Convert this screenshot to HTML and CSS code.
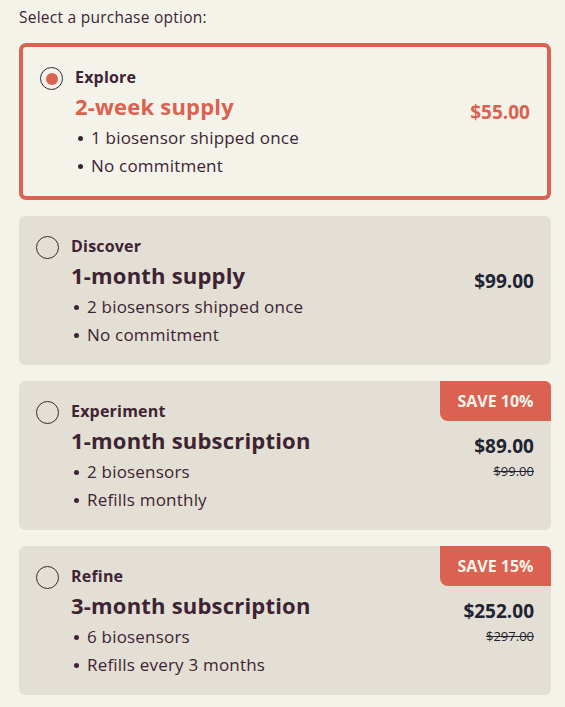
FILE: index.html
```html
<!DOCTYPE html>
<html>
<head>
<meta charset="utf-8">
<link rel="stylesheet" href="styles.css">
</head>
<body>
<div class="page">
  <p class="prompt">Select a purchase option:</p>
  <div class="options">
    <div class="option selected">
      <span class="radio"><span class="dot"></span></span>
      <div class="info">
        <div class="name">Explore</div>
        <div class="title">2-week supply</div>
        <ul class="bullets">
          <li>1 biosensor shipped once</li>
          <li>No commitment</li>
        </ul>
      </div>
      <div class="pricing">
        <div class="price">$55.00</div>
      </div>
    </div>
    <div class="option">
      <span class="radio"></span>
      <div class="info">
        <div class="name">Discover</div>
        <div class="title">1-month supply</div>
        <ul class="bullets">
          <li>2 biosensors shipped once</li>
          <li>No commitment</li>
        </ul>
      </div>
      <div class="pricing">
        <div class="price">$99.00</div>
      </div>
    </div>
    <div class="option">
      <span class="badge">SAVE 10%</span>
      <span class="radio"></span>
      <div class="info">
        <div class="name">Experiment</div>
        <div class="title">1-month subscription</div>
        <ul class="bullets">
          <li>2 biosensors</li>
          <li>Refills monthly</li>
        </ul>
      </div>
      <div class="pricing">
        <div class="price">$89.00</div>
        <div class="old">$99.00</div>
      </div>
    </div>
    <div class="option">
      <span class="badge">SAVE 15%</span>
      <span class="radio"></span>
      <div class="info">
        <div class="name">Refine</div>
        <div class="title">3-month subscription</div>
        <ul class="bullets">
          <li>6 biosensors</li>
          <li>Refills every 3 months</li>
        </ul>
      </div>
      <div class="pricing">
        <div class="price">$252.00</div>
        <div class="old">$297.00</div>
      </div>
    </div>
  </div>
</div>
</body>
</html>
```

FILE: styles.css
```css
html, body {
  margin: 0;
  padding: 0;
  background: #f4f3ea;
}
body {
  font-family: "Open Sans", "Liberation Sans", sans-serif;
  color: #3d2333;
}
.page {
  padding: 0 14px 0 19px;
}
.prompt {
  margin: 0;
  padding-top: 6px;
  font-size: 15.5px;
  letter-spacing: 0.25px;
  line-height: 22px;
  height: 37px;
}
.options {
  display: flex;
  flex-direction: column;
  gap: 16px;
}
.option {
  position: relative;
  display: flex;
  align-items: flex-start;
  background: #e4dfd4;
  border-radius: 6px;
  padding: 20px 17px 16px 17px;
}
.option.selected {
  background: #f4f3ea;
  border: 4px solid #db6150;
  border-radius: 7px;
}
.radio {
  flex: none;
  width: 21px;
  height: 21px;
  border: 1.5px solid #3d2333;
  border-radius: 50%;
  margin-right: 12px;
  display: flex;
  align-items: center;
  justify-content: center;
}
.dot {
  width: 12px;
  height: 12px;
  border-radius: 50%;
  background: #db6150;
}
.info {
  flex: 1;
  margin-top: -1px;
}
.name {
  font-size: 16px;
  font-weight: 700;
  letter-spacing: 0.2px;
  line-height: 22px;
}
.title {
  margin-top: 2px;
  font-size: 22px;
  font-weight: 700;
  letter-spacing: 0.2px;
  line-height: 32px;
}
.selected .title, .selected .price {
  color: #db6150;
}
.bullets {
  list-style: none;
  margin: 2px 0 0 0;
  padding: 0 0 0 3px;
}
.bullets li {
  font-size: 17px;
  letter-spacing: 0.2px;
  line-height: 28px;
  display: flex;
  align-items: center;
}
.bullets li::before {
  content: "";
  width: 5px;
  height: 5px;
  border-radius: 50%;
  background: #3d2333;
  margin-right: 8px;
}
.pricing {
  margin-top: 33px;
  text-align: right;
}
.price {
  font-size: 19px;
  font-weight: 700;
  line-height: 24px;
  color: #1e2333;
}
.old {
  font-size: 13px;
  line-height: 26px;
  color: #1e2333;
  text-decoration: line-through;
}
.badge {
  position: absolute;
  top: 0;
  right: 0;
  width: 111px;
  height: 40px;
  display: flex;
  align-items: center;
  justify-content: center;
  background: #db6150;
  color: #f4f3ea;
  font-size: 16px;
  font-weight: 700;
  border-radius: 0 6px 0 8px;
}
```
